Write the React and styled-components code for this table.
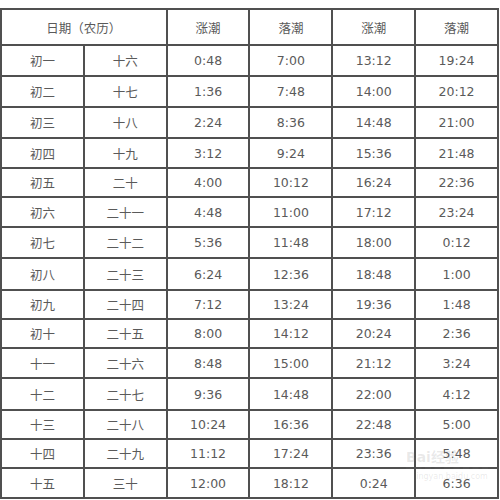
import styled, { createGlobalStyle } from "styled-components";

const GlobalStyle = createGlobalStyle`
  html, body {
    margin: 0;
    padding: 0;
    background: #fff;
  }
  body {
    font-family: "DejaVu Sans", "Noto Sans CJK SC", sans-serif;
  }
`;

const Page = styled.div`
  position: relative;
  width: 500px;
  height: 500px;
  padding-top: 8px;
  box-sizing: border-box;
  overflow: hidden;
`;

const Table = styled.table`
  width: 499px;
  border-collapse: collapse;
  table-layout: fixed;
  border: 2px solid #505050;
`;

const Row = styled.tr`
  height: ${(p) => p.$h}px;
`;

const Cell = styled.td`
  border: 2px solid #505050;
  padding: 0;
  text-align: center;
  vertical-align: middle;
  font-size: 12.5px;
  color: #5a5a5a;
  font-family: ${(p) =>
    p.$cn
      ? `"Noto Sans CJK SC", sans-serif`
      : `"DejaVu Sans", "Noto Sans CJK SC", sans-serif`};
  white-space: nowrap;
`;

const Watermark = styled.div`
  position: absolute;
  left: 406px;
  top: 450px;
  pointer-events: none;
  white-space: nowrap;
  color: rgba(120, 120, 120, 0.16);
  font-family: "DejaVu Sans", "Noto Sans CJK SC", sans-serif;
  font-size: 14px;
  font-weight: bold;
  line-height: 14px;
`;

const WatermarkLine = styled.div`
  margin-top: 3px;
  border-top: 2px dashed rgba(90, 90, 90, 0.4);
  width: 82px;
`;

const WatermarkUrl = styled.div`
  font-size: 8px;
  line-height: 10px;
  font-weight: normal;
  margin-top: 3px;
  padding-left: 8px;
`;

const rows = [
  ["初一", "十六", "0:48", "7:00", "13:12", "19:24", 31],
  ["初二", "十七", "1:36", "7:48", "14:00", "20:12", 31],
  ["初三", "十八", "2:24", "8:36", "14:48", "21:00", 31],
  ["初四", "十九", "3:12", "9:24", "15:36", "21:48", 30],
  ["初五", "二十", "4:00", "10:12", "16:24", "22:36", 29],
  ["初六", "二十一", "4:48", "11:00", "17:12", "23:24", 30],
  ["初七", "二十二", "5:36", "11:48", "18:00", "0:12", 31],
  ["初八", "二十三", "6:24", "12:36", "18:48", "1:00", 32],
  ["初九", "二十四", "7:12", "13:24", "19:36", "1:48", 29],
  ["初十", "二十五", "8:00", "14:12", "20:24", "2:36", 29],
  ["十一", "二十六", "8:48", "15:00", "21:12", "3:24", 30],
  ["十二", "二十七", "9:36", "14:48", "22:00", "4:12", 32],
  ["十三", "二十八", "10:24", "16:36", "22:48", "5:00", 29],
  ["十四", "二十九", "11:12", "17:24", "23:36", "5:48", 29],
  ["十五", "三十", "12:00", "18:12", "0:24", "6:36", 30],
];

export default function App() {
  return (
    <Page>
      <GlobalStyle />
      <Table>
        <tbody>
          <Row $h={36}>
            <Cell $cn colSpan={2}>日期（农历）</Cell>
            <Cell $cn>涨潮</Cell>
            <Cell $cn>落潮</Cell>
            <Cell $cn>涨潮</Cell>
            <Cell $cn>落潮</Cell>
          </Row>
          {rows.map((r) => (
            <Row key={r[0]} $h={r[6]}>
              <Cell $cn>{r[0]}</Cell>
              <Cell $cn>{r[1]}</Cell>
              <Cell>{r[2]}</Cell>
              <Cell>{r[3]}</Cell>
              <Cell>{r[4]}</Cell>
              <Cell>{r[5]}</Cell>
            </Row>
          ))}
        </tbody>
      </Table>
      <Watermark>
        Bai经验
        <WatermarkLine />
        <WatermarkUrl>jingyan.baidu.com</WatermarkUrl>
      </Watermark>
    </Page>
  );
}
